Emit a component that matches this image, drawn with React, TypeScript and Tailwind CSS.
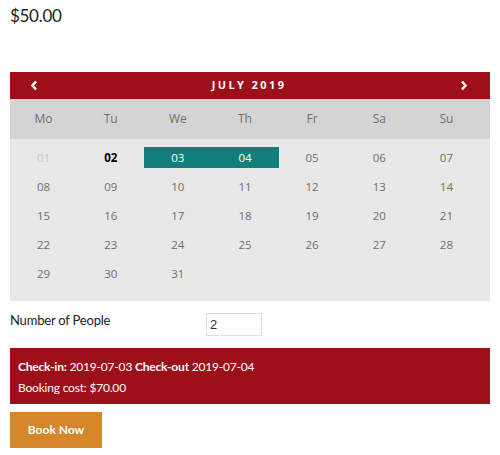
import { FC } from "react";

const dayNames = ["Mo", "Tu", "We", "Th", "Fr", "Sa", "Su"];

const weeks: (number | null)[][] = [
  [1, 2, 3, 4, 5, 6, 7],
  [8, 9, 10, 11, 12, 13, 14],
  [15, 16, 17, 18, 19, 20, 21],
  [22, 23, 24, 25, 26, 27, 28],
  [29, 30, 31, null, null, null, null],
];

const pad = (n: number) => (n < 10 ? `0${n}` : `${n}`);

const Chevron: FC<{ dir: "left" | "right" }> = ({ dir }) => (
  <svg width="8" height="11" viewBox="0 0 8 11" className="block">
    <path
      d={dir === "left" ? "M6 1.5 L2.5 5.5 L6 9.5" : "M2 1.5 L5.5 5.5 L2 9.5"}
      fill="none"
      stroke="white"
      strokeWidth="2.6"
    />
  </svg>
);

const DayCell: FC<{ day: number | null }> = ({ day }) => {
  if (day === null) return <div className="h-[21px]" />;
  const selected = day === 3 || day === 4;
  const past = day === 1;
  const today = day === 2;
  return (
    <div
      className={
        selected
          ? "flex h-[21px] items-center justify-center bg-[#127f7a] text-white"
          : past
            ? "flex h-[21px] items-center justify-center text-[#c9c9c9]"
            : today
              ? "flex h-[21px] items-center justify-center font-bold text-black"
              : "flex h-[21px] items-center justify-center text-[#6e6e6e]"
      }
    >
      {pad(day)}
    </div>
  );
};

const App: FC = () => {
  return (
    <div className="h-[455px] w-[500px] bg-white px-[10px] pt-[4px] font-['Lato','Open_Sans',sans-serif] text-[#222]">
      <div className="text-[17px] leading-[24px] tracking-[-0.3px] text-[#1a1a1a]">
        $50.00
      </div>

      <div className="mt-[44px] w-[480px]">
        <div className="flex h-[27px] items-center justify-between bg-[#9d1019] pr-[22px] pl-[20px] text-white">
          <Chevron dir="left" />
          <span className="font-['Open_Sans',sans-serif] text-[11px] font-bold tracking-[2.4px]">
            JULY 2019
          </span>
          <Chevron dir="right" />
        </div>

        <div className="flex bg-[#d4d4d4]">
          <div className="grid h-[40px] w-[470px] grid-cols-7 items-center font-['Open_Sans',sans-serif] text-[12px] text-[#707070]">
            {dayNames.map((d) => (
              <div key={d} className="text-center">
                {d}
              </div>
            ))}
          </div>
        </div>

        <div className="bg-[#e8e8e8] pt-[8px] pb-[17px]">
          <div className="grid w-[470px] grid-cols-7 gap-y-[8px] font-['Open_Sans',sans-serif] text-[11.5px]">
            {weeks.flat().map((d, i) => (
              <DayCell key={i} day={d} />
            ))}
          </div>
        </div>
      </div>

      <div className="mt-[12px] flex items-start">
        <label className="w-[196px] text-[13px] leading-[14px] tracking-[-0.2px] text-[#222]">
          Number of People
        </label>
        <input
          defaultValue="2"
          className="h-[23px] w-[56px] border border-[#e0e0e0] px-[3px] font-['Liberation_Sans',sans-serif] text-[13px] text-[#333] outline-none"
        />
      </div>

      <div className="mt-[12px] h-[56px] w-[480px] bg-[#9d1019] px-[8px] pt-[8px] text-[12px] leading-[21px] tracking-[-0.2px] text-white">
        <div>
          <b>Check-in:</b> 2019-07-03 <b>Check-out</b> 2019-07-04
        </div>
        <div>Booking cost: $70.00</div>
      </div>

      <button className="mt-[8px] h-[36px] w-[92px] bg-[#d5872a] text-[12px] font-bold text-white">
        Book Now
      </button>
    </div>
  );
};

export default App;
